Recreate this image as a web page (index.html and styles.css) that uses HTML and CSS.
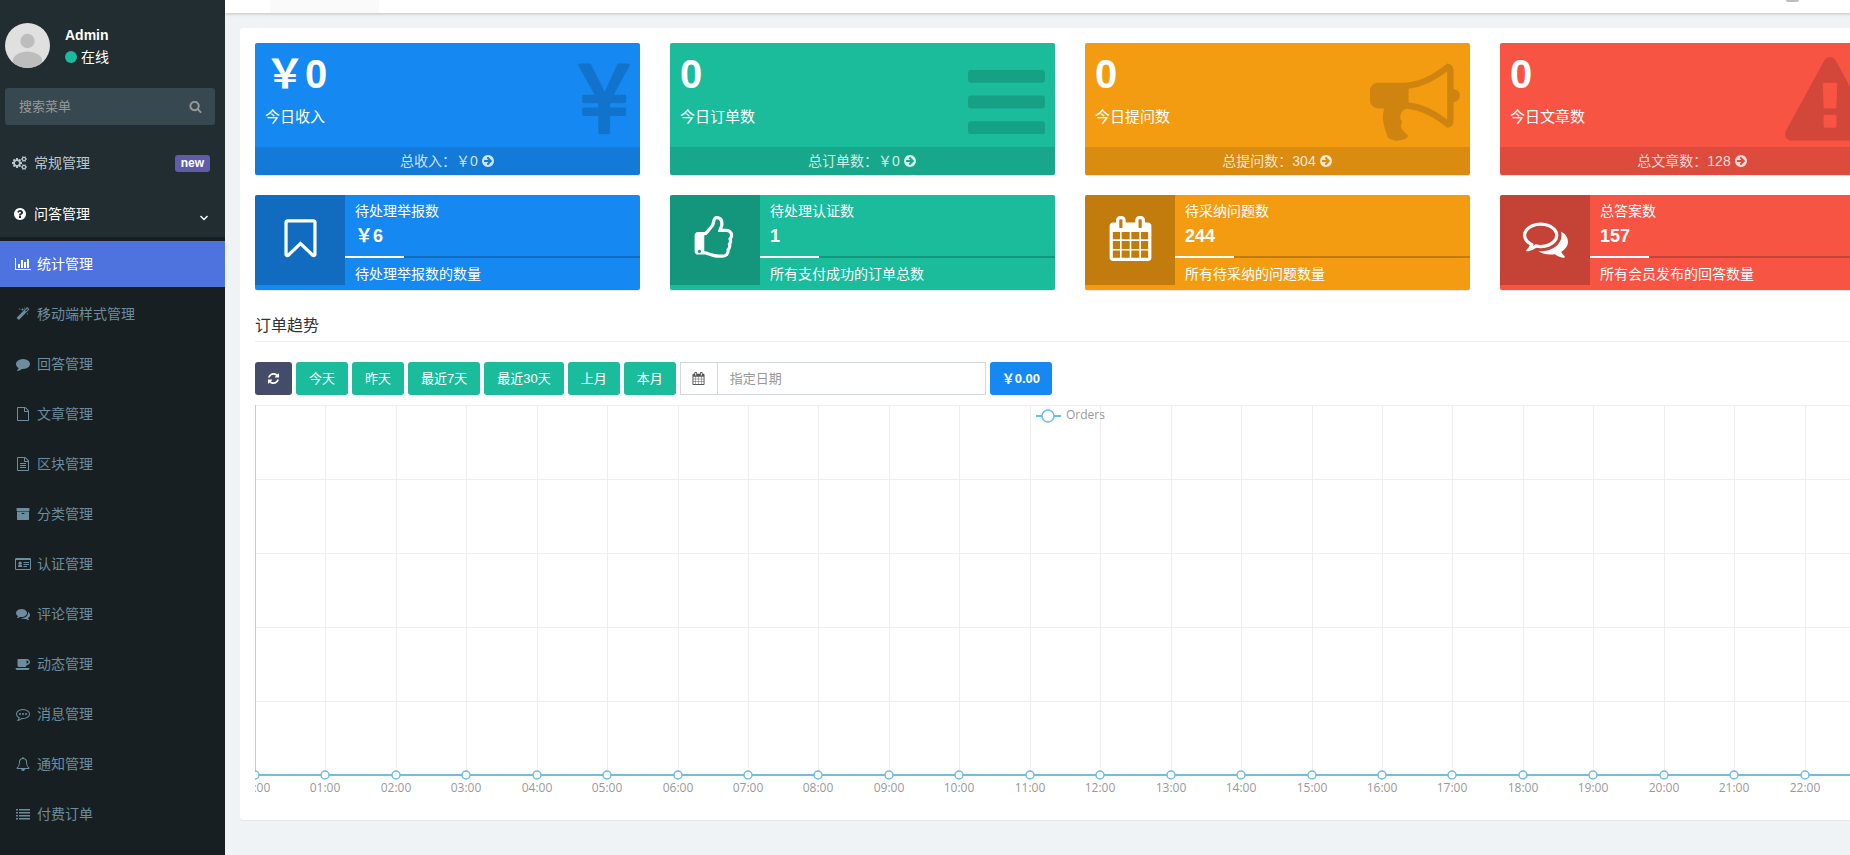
FILE: index.html
```html
<!DOCTYPE html>
<html lang="zh-CN">
<head>
<meta charset="utf-8">
<title>统计管理</title>
<link rel="stylesheet" href="styles.css">
</head>
<body>
<svg class="sprite" aria-hidden="true">
  <symbol id="i-search" viewBox="0 0 1792 1792"><path d="M1216 832q0-185-131.500-316.500t-316.500-131.500-316.500 131.500-131.500 316.500 131.500 316.500 316.500 131.500 316.500-131.500 131.500-316.500zm512 832q0 52-38 90t-90 38q-54 0-90-38l-343-342q-179 124-399 124-143 0-273.500-55.500t-225-150-150-225-55.500-273.500 55.500-273.500 150-225 225-150 273.500-55.500 273.500 55.500 225 150 150 225 55.500 273.500q0 220-124 399l343 343q37 37 37 90z"/></symbol>
  <symbol id="i-cogs" viewBox="0 0 1920 1792"><path d="M832 896q0-106-75-181t-181-75-181 75-75 181 75 181 181 75 181-75 75-181zm768 512q0-52-38-90t-90-38-90 38-38 90q0 53 37.500 90.500t90.500 37.500 90.500-37.500 37.500-90.500zm0-1024q0-52-38-90t-90-38-90 38-38 90q0 53 37.500 90.500t90.500 37.500 90.500-37.500 37.500-90.500zm-384 421v185q0 10-7 19.500t-16 10.500l-155 24q-11 35-32 76 34 48 90 115 7 11 7 20 0 12-7 19-23 30-82.500 89.500t-78.500 59.500q-11 0-21-7l-115-90q-37 19-77 31-11 108-23 155-7 24-30 24h-186q-11 0-20-7.500t-10-17.500l-23-153q-34-10-75-31l-118 89q-7 7-20 7-11 0-21-8-144-133-144-160 0-9 7-19 10-14 41-53t47-61q-23-44-35-82l-152-24q-10-1-17-9.500t-7-19.500v-185q0-10 7-19.500t16-10.500l155-24q11-35 32-76-34-48-90-115-7-11-7-20 0-12 7-20 22-30 82-89t79-59q11 0 21 7l115 90q34-18 77-32 11-108 23-154 7-24 30-24h186q11 0 20 7.500t10 17.500l23 153q34 10 75 31l118-89q8-7 20-7 11 0 21 8 144 133 144 160 0 8-7 19-12 16-42 54t-45 60q23 48 34 82l152 23q10 2 17 10.500t7 19.500zm640 533v140q0 16-149 31-12 27-30 52 51 113 51 138 0 4-4 7-122 71-124 71-8 0-46-47t-52-68q-20 2-30 2t-30-2q-14 21-52 68t-46 47q-2 0-124-71-4-3-4-7 0-25 51-138-18-25-30-52-149-15-149-31v-140q0-16 149-31 13-29 30-52-51-113-51-138 0-4 4-7 4-2 35-20t59-34 30-16q8 0 46 46.500t52 67.500q20-2 30-2t30 2q51-71 92-112l6-2q4 0 124 70 4 3 4 7 0 25-51 138 17 23 30 52 149 15 149 31zm0-1024v140q0 16-149 31-12 27-30 52 51 113 51 138 0 4-4 7-122 71-124 71-8 0-46-47t-52-68q-20 2-30 2t-30-2q-14 21-52 68t-46 47q-2 0-124-71-4-3-4-7 0-25 51-138-18-25-30-52-149-15-149-31v-140q0-16 149-31 13-29 30-52-51-113-51-138 0-4 4-7 4-2 35-20t59-34 30-16q8 0 46 46.500t52 67.500q20-2 30-2t30 2q51-71 92-112l6-2q4 0 124 70 4 3 4 7 0 25-51 138 17 23 30 52 149 15 149 31z"/></symbol>
  <symbol id="i-question" viewBox="0 0 1792 1792"><path d="M1024 1376v-192q0-14-9-23t-23-9h-192q-14 0-23 9t-9 23v192q0 14 9 23t23 9h192q14 0 23-9t9-23zm256-672q0-88-55.500-163t-138.500-116-170-41q-243 0-371 213-15 24 8 42l132 100q7 6 19 6 16 0 25-12 53-68 86-92 34-24 86-24 48 0 85.500 26t37.500 59q0 38-20 61t-68 45q-63 28-115.500 86.500t-52.500 125.500v36q0 14 9 23t23 9h192q14 0 23-9t9-23q0-19 21.500-49.500t54.500-49.500q32-18 49-28.500t46-35 44.500-48 28-60.500 12.500-81zm384 192q0 209-103 385.500t-279.500 279.500-385.500 103-385.500-103-279.500-279.500-103-385.500 103-385.500 279.500-279.500 385.500-103 385.500 103 279.500 279.500 103 385.500z"/></symbol>
  <symbol id="i-chart" viewBox="0 0 2048 1792"><path d="M640 896v512h-256v-512h256zm384-512v1024h-256v-1024h256zm1024 1152v128h-2048v-1536h128v1408h1920zm-640-896v768h-256v-768h256zm384-384v1152h-256v-1152h256z"/></symbol>
  <symbol id="i-magic" viewBox="0 0 1792 1792"><path fill-rule="evenodd" d="M1254 581l293-293-107-107-293 293zm447-293q0 27-18 45l-1286 1286q-18 18-45 18t-45-18l-198-198q-18-18-18-45t18-45l1286-1286q18-18 45-18t45 18l198 198q18 18 18 45z"/><path d="M448 128l40 88 88 40-88 40-40 88-40-88-88-40 88-40zM832 128l64 132 132 60-132 60-64 132-64-132-132-60 132-60zM1472 768l40 88 88 40-88 40-40 88-40-88-88-40 88-40zM1088 20l30 78 78 30-78 30-30 78-30-78-78-30 78-30z"/></symbol>
  <symbol id="i-comment" viewBox="0 0 1792 1792"><path d="M1792 896q0 174-120 321.500t-326 233-450 85.500q-70 0-145-8-198 175-460 242-49 14-114 22-17 2-30.500-9t-17.500-29v-1q-3-4-.5-12t2-10 4.500-9.500l6-9 7-8.500 8-9q7-8 31-34.500t34.500-38 31-39.500 32.500-51 27-59 26-76q-157-89-247.500-220t-90.500-281q0-130 71-248.500t191-204.500 286-136.500 348-50.500q244 0 450 85.500t326 233 120 321.500z"/></symbol>
  <symbol id="i-file" viewBox="0 0 1792 1792"><path d="M1596 380q28 28 48 76t20 88v1152q0 40-28 68t-68 28h-1344q-40 0-68-28t-28-68v-1600q0-40 28-68t68-28h896q40 0 88 20t76 48zm-444-244v376h376q-10-29-22-41l-313-313q-12-12-41-22zm384 1528v-1024h-416q-40 0-68-28t-28-68v-416h-768v1536h1280z"/></symbol>
  <symbol id="i-file-text" viewBox="0 0 1792 1792"><path d="M1596 380q28 28 48 76t20 88v1152q0 40-28 68t-68 28h-1344q-40 0-68-28t-28-68v-1600q0-40 28-68t68-28h896q40 0 88 20t76 48zm-444-244v376h376q-10-29-22-41l-313-313q-12-12-41-22zm384 1528v-1024h-416q-40 0-68-28t-28-68v-416h-768v1536h1280zM512 768h768v128h-768zM512 1024h768v128h-768zM512 1280h768v128h-768z"/></symbol>
  <symbol id="i-archive" viewBox="0 0 1792 1792"><path d="M1088 832q0-26-19-45t-45-19h-256q-26 0-45 19t-19 45 19 45 45 19h256q26 0 45-19t19-45zm576-192v960q0 26-19 45t-45 19h-1408q-26 0-45-19t-19-45v-960q0-26 19-45t45-19h1408q26 0 45 19t19 45zm64-448v256q0 26-19 45t-45 19h-1536q-26 0-45-19t-19-45v-256q0-26 19-45t45-19h1536q26 0 45 19t19 45z"/></symbol>
  <symbol id="i-card" viewBox="0 0 2048 1792"><path fill-rule="evenodd" d="M160 128h1728q66 0 113 47t47 113v1216q0 66-47 113t-113 47h-1728q-66 0-113-47t-47-113v-1216q0-66 47-113t113-47zM128 384v1120q0 32 32 32h1728q32 0 32-32v-1120z"/><path d="M384 1280q-10-250 130-300h280q140 50 130 300zM1088 640h704v128h-704zM1088 896h704v128h-704zM1088 1152h448v128h-448z"/><circle cx="654" cy="790" r="210"/></symbol>
  <symbol id="i-comments" viewBox="0 0 1792 1792"><path d="M1408 768q0 139-94 257t-256.500 186.500-353.500 68.500q-86 0-176-16-124 88-278 128-36 9-86 16h-3q-11 0-20.500-8t-11.500-21q-1-3-1-6.500t.5-6.500 2-6l2.500-5 3.500-5.500 4-5 4.500-5 4-4.500q5-6 23-25t26-29.500 22.500-29 25-38.500 20.500-44q-124-72-195-177t-71-224q0-139 94-257t256.500-186.500 353.500-68.500 353.500 68.500 256.500 186.500 94 257zm384 256q0 120-71 224.500t-195 176.500q10 24 20.500 44t25 38.500 22.500 29 26 29.500 23 25q1 1 4 4.500t4.500 5 4 5 3.500 5.500l2.500 5 2 6 .5 6.500-1 6.500q-3 14-13 22t-22 7q-50-7-86-16-154-40-278-128-90 16-176 16-271 0-472-132 58 4 88 4 161 0 309-45t264-129q125-92 192-212t67-254q0-77-23-152 129 71 204 178t75 230z"/></symbol>
  <symbol id="i-comments-o" viewBox="0 0 1792 1792"><path d="M704 384q-153 0-286 52t-211.500 141-78.500 191q0 82 53 158t149 132l97 56-35 84q34-20 62-39l44-31 53 10q78 14 153 14 153 0 286-52t211.500-141 78.500-191-78.500-191-211.500-141-286-52zm0-128q191 0 353.500 68.500t256.500 186.500 94 257-94 257-256.500 186.500-353.500 68.500q-86 0-176-16-124 88-278 128-36 9-86 16h-3q-11 0-20.500-8t-11.500-21q-1-3-1-6.500t.5-6.500 2-6l2.500-5 3.500-5.500 4-5 4.500-5 4-4.500q5-6 23-25t26-29.500 22.500-29 25-38.500 20.500-44q-124-72-195-177t-71-224q0-139 94-257t256.500-186.500 353.500-68.500zm822 1169q10 24 20.500 44t25 38.500 22.500 29 26 29.500 23 25q1 1 4 4.500t4.500 5 4 5 3.500 5.500l2.500 5 2 6 .5 6.500-1 6.500q-3 14-13 22t-22 7q-50-7-86-16-154-40-278-128-90 16-176 16-271 0-472-132 58 4 88 4 161 0 309-45t264-129q125-92 192-212t67-254q0-77-23-152 129 71 204 178t75 230q0 120-71 224.500t-195 176.500z"/></symbol>
  <symbol id="i-coffee" viewBox="0 0 1920 1792"><path d="M1664 640q0-80-56-136t-136-56h-64v384h64q80 0 136-56t56-136zm-1664 768h1792q0 106-75 181t-181 75h-1280q-106 0-181-75t-75-181zm1856-768q0 159-112.500 271.500t-271.500 112.500h-64v32q0 92-66 158t-158 66h-704q-92 0-158-66t-66-158v-736q0-26 19-45t45-19h1152q159 0 271.500 112.500t112.500 271.500z"/></symbol>
  <symbol id="i-commenting" viewBox="0 0 1792 1792"><path d="M896 384q-204 0-381.500 69.500t-282 187.500-104.500 255q0 112 71.500 213.500t201.500 175.500l87 50-27 96q-24 91-70 172 152-63 275-171l43-38 57 6q69 8 130 8 204 0 381.500-69.500t282-187.500 104.500-255-104.500-255-282-187.500-381.500-69.500zm896 512q0 174-120 321.500t-326 233-450 85.500q-70 0-145-8-198 175-460 242-49 14-114 22h-5q-15 0-27-10.500t-16-27.500v-1q-3-4-.5-12t2-10 4.500-9.500l6-9 7-8.500 8-9q7-8 31-34.500t34.500-38 31-39.500 32.500-51 27-59 26-76q-157-89-247.500-220t-90.500-281q0-174 120-321.500t326-233 450-85.500 450 85.500 326 233 120 321.500z"/><circle cx="512" cy="896" r="128"/><circle cx="896" cy="896" r="128"/><circle cx="1280" cy="896" r="128"/></symbol>
  <symbol id="i-bell" viewBox="0 0 1792 1792"><path d="M912 1696q0-16-16-16-59 0-101.500-42.500t-42.500-101.500q0-16-16-16t-16 16q0 73 51.500 124.500t124.500 51.500q16 0 16-16zm-666-288h1300q-266-300-266-832 0-51-24-105t-69-103-121.500-80.500-169.500-31.500-169.500 31.500-121.500 80.500-69 103-24 105q0 532-266 832zm1482 0q0 52-38 90t-90 38h-448q0 106-75 181t-181 75-181-75-75-181h-448q-52 0-90-38t-38-90q50-42 91-88t85-119.500 74.500-158.500 50-206 19.500-260q0-152 117-282.500t307-158.500q-8-19-8-39 0-40 28-68t68-28 68 28 28 68q0 20-8 39 190 28 307 158.500t117 282.500q0 139 19.500 260t50 206 74.500 158.500 85 119.500 91 88z"/></symbol>
  <symbol id="i-list" viewBox="0 0 1792 1792"><path d="M0 256h256v192H0zM0 640h256v192H0zM0 1024h256v192H0zM0 1408h256v192H0zM384 256h1408v192H384zM384 640h1408v192H384zM384 1024h1408v192H384zM384 1408h1408v192H384z"/></symbol>
  <symbol id="i-yen" viewBox="382 0 1029 1792"><path d="M985.500 1536h-172q-13 0-22.500-9t-9.500-23v-330h-288q-13 0-22.500-9t-9.500-23v-103q0-13 9.500-22.500t22.500-9.500h288v-85h-288q-13 0-22.500-9t-9.500-23v-104q0-13 9.500-22.500t22.500-9.500h214l-321-578q-8-16 0-32 10-16 28-16h194q19 0 29 18l215 425q19 38 56 125 10-24 30.500-68t27.500-61l191-420q8-19 29-19h191q17 0 27 16 9 14 1 31l-313 579h215q13 0 22.500 9.500t9.500 22.500v104q0 14-9.500 23t-22.500 9h-290v85h290q13 0 22.500 9.500t9.500 22.500v103q0 14-9.500 23t-22.500 9h-290v330q0 13-9.500 22.500t-22.500 9.500z"/></symbol>
  <symbol id="i-bars" viewBox="128 0 1536 1792"><rect x="128" y="256" width="1536" height="256" rx="64"/><rect x="128" y="768" width="1536" height="256" rx="64"/><rect x="128" y="1280" width="1536" height="256" rx="64"/></symbol>
  <symbol id="i-bullhorn" viewBox="0 0 1792 1792"><path d="M1664 640q53 0 90.500 37.500t37.500 90.500-37.500 90.500-90.500 37.500v384q0 52-38 90t-90 38q-417-347-812-380-58 19-91 66t-31 100.500 40 92.500q-20 33-23 65.500t6 58 33.500 55 48 50 61.500 50.500q-29 58-111.500 83t-168.500 11.500-132-55.500q-7-23-29.500-87.500t-32-94.500-23-89-15-101 3.500-98.500 22-110.500h-122q-66 0-113-47t-47-113v-192q0-66 47-113t113-47h480q435 0 896-384 52 0 90 38t38 90v384zm-128 604v-954q-394 302-768 343v270q377 42 768 341z"/></symbol>
  <symbol id="i-warning" viewBox="0 0 1792 1792"><path d="M1024 1375v-190q0-14-9.500-23.500t-22.500-9.500h-192q-13 0-22.500 9.500t-9.500 23.500v190q0 14 9.500 23.500t22.500 9.500h192q13 0 22.500-9.500t9.500-23.500zm-2-374l18-459q0-12-10-19-13-11-24-11h-220q-11 0-24 11-10 7-10 21l17 457q0 10 10 16.500t24 6.500h185q14 0 23.500-6.500t10.500-16.500zm-14-934l768 1408q35 63-2 126-17 29-46.500 46t-63.500 17h-1536q-34 0-63.500-17t-46.500-46q-37-63-2-126l768-1408q17-31 47-49t65-18 65 18 47 49z"/></symbol>
  <symbol id="i-arrow" viewBox="0 0 1792 1792"><path d="M1413 896q0-27-18-45l-91-91-362-362q-18-18-45-18t-45 18l-91 91q-18 18-18 45t18 45l189 189h-502q-26 0-45 19t-19 45v128q0 26 19 45t45 19h502l-189 189q-18 18-18 45t18 45l91 91q18 18 45 18t45-18l362-362 91-91q18-18 18-45zm251 0q0 209-103 385.500t-279.500 279.500-385.500 103-385.500-103-279.500-279.500-103-385.500 103-385.500 279.500-279.500 385.500-103 385.500 103 279.500 279.500 103 385.500z"/></symbol>
  <symbol id="i-bookmark" viewBox="0 0 1792 1792"><path d="M1408 256h-1024v1242l423-406 89-85 89 85 423 406v-1242zm12-128q23 0 44 9 33 13 52.500 41t19.500 62v1289q0 34-19.500 62t-52.500 41q-19 8-44 8-48 0-83-32l-441-424-441 424q-36 33-83 33-23 0-44-9-33-13-52.500-41t-19.500-62v-1289q0-34 19.500-62t52.500-41q21-9 44-9h1048z"/></symbol>
  <symbol id="i-thumb" viewBox="-64 0 1792 1792"><path d="M256 1408q0-26-19-45t-45-19q-27 0-45.500 19t-18.500 45q0 27 18.500 45.500t45.500 18.500q26 0 45-18.500t19-45.500zm1152-640q0-51-39-89.500t-89-38.500h-352q0-58 48-159.500t48-160.500q0-98-32-145t-128-47q-26 26-38 85t-30.500 125.500-59.500 109.500q-22 23-77 91-4 5-23 30t-31.500 41-34.500 42.500-40 44-38.500 35.500-40 27-35.500 9h-32v640h32q13 0 31.500 3t33 6.500 38 11 35 11.500 35.500 12.500 29 10.500q211 73 342 73h121q192 0 192-167 0-26-5-56 30-16 47.500-52.500t17.500-73.500-18-69q53-50 53-119 0-25-10-55.500t-25-47.500q32-1 53.500-47t21.500-81zm128-1q0 89-49 163 9 33 9 69 0 77-38 144 3 21 3 43 0 101-60 178 1 139-85 219.500t-227 80.500h-129q-96 0-189.500-22.500t-216.500-65.500q-116-40-138-40h-288q-53 0-90.500-37.500t-37.500-90.500v-640q0-53 37.500-90.500t90.500-37.500h274q36-24 137-155 58-75 107-128 24-25 35.500-85.500t30.500-126.500 62-108q39-37 90-37 84 0 151 32.500t102 101.500 35 186q0 93-48 192h176q104 0 180 76t76 179z"/></symbol>
  <symbol id="i-calendar" viewBox="0 0 1792 1792"><path d="M192 1664h288v-288h-288v288zm352 0h320v-288h-320v288zm-352-352h288v-320h-288v320zm352 0h320v-320h-320v320zm-352-384h288v-288h-288v288zm736 736h320v-288h-320v288zm-384-736h320v-288h-320v288zm768 736h288v-288h-288v288zm-384-352h320v-320h-320v320zm-352-864v-288q0-13-9.500-22.500t-22.500-9.500h-64q-13 0-22.500 9.500t-9.500 22.500v288q0 13 9.500 22.500t22.500 9.500h64q13 0 22.500-9.500t9.500-22.500zm736 864h288v-320h-288v320zm-384-384h320v-288h-320v288zm384 0h288v-288h-288v288zm32-480v-288q0-13-9.500-22.500t-22.500-9.500h-64q-13 0-22.500 9.500t-9.500 22.500v288q0 13 9.500 22.500t22.500 9.500h64q13 0 22.500-9.500t9.500-22.500zm384-64v1280q0 52-38 90t-90 38h-1408q-52 0-90-38t-38-90v-1280q0-52 38-90t90-38h128v-96q0-66 47-113t113-47h64q66 0 113 47t47 113v96h384v-96q0-66 47-113t113-47h64q66 0 113 47t47 113v96h128q52 0 90 38t38 90z"/></symbol>
  <symbol id="i-refresh" viewBox="0 0 1792 1792"><path d="M1639 1056q0 5-1 7-64 268-268 434.500t-478 166.500q-146 0-282.500-55t-243.500-157l-129 129q-19 19-45 19t-45-19-19-45v-448q0-26 19-45t45-19h448q26 0 45 19t19 45-19 45l-137 137q71 66 161 102t187 36q134 0 250-65t186-179q11-17 53-117 8-23 30-23h192q13 0 22.500 9.500t9.500 22.500zm25-800v448q0 26-19 45t-45 19h-448q-26 0-45-19t-19-45 19-45l138-138q-148-137-349-137-134 0-250 65t-186 179q-11 17-53 117-8 23-30 23h-199q-13 0-22.500-9.500t-9.500-22.500v-7q65-268 270-434.500t480-166.500q146 0 284 55.500t245 156.500l130-129q19-19 45-19t45 19 19 45z"/></symbol>
</svg>

<div class="layout">
  <aside class="sidebar">
    <div class="user">
      <svg class="avatar" viewBox="0 0 45 45" aria-hidden="true">
        <clipPath id="avatar-clip"><circle cx="22.500" cy="22.500" r="22.500"/></clipPath>
        <g clip-path="url(#avatar-clip)">
          <rect width="45" height="45" fill="#e0e0e0"/>
          <circle cx="22.500" cy="18" r="7.200" fill="#bdbdbd"/>
          <ellipse cx="22.500" cy="38" rx="14.700" ry="9.500" fill="#bdbdbd"/>
        </g>
      </svg>
      <div class="user-info">
        <strong class="user-name">Admin</strong>
        <span class="user-status"><i class="dot"></i>在线</span>
      </div>
    </div>
    <form class="search">
      <input class="search-input" type="text" placeholder="搜索菜单" aria-label="搜索菜单">
      <button class="search-btn" type="button" aria-label="搜索"><svg class="icon"><use href="#i-search"/></svg></button>
    </form>
    <nav class="menu">
      <a class="menu-item" href="#"><span class="menu-icon"><svg class="icon icon-wide"><use href="#i-cogs"/></svg></span>常规管理<span class="badge">new</span></a>
      <a class="menu-item menu-open" href="#"><span class="menu-icon"><svg class="icon"><use href="#i-question"/></svg></span>问答管理<svg class="chevron" viewBox="0 0 8 6"><path d="M0.500 1l3.500 3.500L7.500 1"/></svg></a>
      <div class="submenu">
        <a class="sub-item active" href="#"><span class="menu-icon"><svg class="icon icon-wide"><use href="#i-chart"/></svg></span>统计管理</a>
        <a class="sub-item" href="#"><span class="menu-icon"><svg class="icon"><use href="#i-magic"/></svg></span>移动端样式管理</a>
        <a class="sub-item" href="#"><span class="menu-icon"><svg class="icon"><use href="#i-comment"/></svg></span>回答管理</a>
        <a class="sub-item" href="#"><span class="menu-icon"><svg class="icon"><use href="#i-file"/></svg></span>文章管理</a>
        <a class="sub-item" href="#"><span class="menu-icon"><svg class="icon"><use href="#i-file-text"/></svg></span>区块管理</a>
        <a class="sub-item" href="#"><span class="menu-icon"><svg class="icon"><use href="#i-archive"/></svg></span>分类管理</a>
        <a class="sub-item" href="#"><span class="menu-icon"><svg class="icon icon-wide"><use href="#i-card"/></svg></span>认证管理</a>
        <a class="sub-item" href="#"><span class="menu-icon"><svg class="icon"><use href="#i-comments"/></svg></span>评论管理</a>
        <a class="sub-item" href="#"><span class="menu-icon"><svg class="icon icon-wide"><use href="#i-coffee"/></svg></span>动态管理</a>
        <a class="sub-item" href="#"><span class="menu-icon"><svg class="icon"><use href="#i-commenting"/></svg></span>消息管理</a>
        <a class="sub-item" href="#"><span class="menu-icon"><svg class="icon"><use href="#i-bell"/></svg></span>通知管理</a>
        <a class="sub-item" href="#"><span class="menu-icon"><svg class="icon"><use href="#i-list"/></svg></span>付费订单</a>
      </div>
    </nav>
  </aside>

  <div class="content">
    <header class="topbar"><span class="topbar-tab"></span><span class="topbar-avatar"></span></header>
    <main class="panel">
      <section class="cards">
        <article class="stat blue">
          <div class="stat-body"><div><h3 class="stat-value">￥0</h3><p class="stat-label">今日收入</p></div><svg class="stat-icon yen"><use href="#i-yen"/></svg></div>
          <a class="stat-footer" href="#">总收入：￥0 <svg class="icon"><use href="#i-arrow"/></svg></a>
        </article>
        <article class="stat green">
          <div class="stat-body"><div><h3 class="stat-value">0</h3><p class="stat-label">今日订单数</p></div><svg class="stat-icon bars"><use href="#i-bars"/></svg></div>
          <a class="stat-footer" href="#">总订单数：￥0 <svg class="icon"><use href="#i-arrow"/></svg></a>
        </article>
        <article class="stat orange">
          <div class="stat-body"><div><h3 class="stat-value">0</h3><p class="stat-label">今日提问数</p></div><svg class="stat-icon"><use href="#i-bullhorn"/></svg></div>
          <a class="stat-footer" href="#">总提问数：304 <svg class="icon"><use href="#i-arrow"/></svg></a>
        </article>
        <article class="stat red">
          <div class="stat-body"><div><h3 class="stat-value">0</h3><p class="stat-label">今日文章数</p></div><svg class="stat-icon"><use href="#i-warning"/></svg></div>
          <a class="stat-footer" href="#">总文章数：128 <svg class="icon"><use href="#i-arrow"/></svg></a>
        </article>
        <article class="info blue">
          <span class="info-icon"><svg class="icon"><use href="#i-bookmark"/></svg></span>
          <div class="info-body"><span class="info-text">待处理举报数</span><strong class="info-number">￥6</strong><div class="progress"><div class="progress-bar"></div></div><span class="info-text">待处理举报数的数量</span></div>
        </article>
        <article class="info green">
          <span class="info-icon"><svg class="icon"><use href="#i-thumb"/></svg></span>
          <div class="info-body"><span class="info-text">待处理认证数</span><strong class="info-number">1</strong><div class="progress"><div class="progress-bar"></div></div><span class="info-text">所有支付成功的订单总数</span></div>
        </article>
        <article class="info orange">
          <span class="info-icon"><svg class="icon"><use href="#i-calendar"/></svg></span>
          <div class="info-body"><span class="info-text">待采纳问题数</span><strong class="info-number">244</strong><div class="progress"><div class="progress-bar"></div></div><span class="info-text">所有待采纳的问题数量</span></div>
        </article>
        <article class="info red">
          <span class="info-icon"><svg class="icon"><use href="#i-comments-o"/></svg></span>
          <div class="info-body"><span class="info-text">总答案数</span><strong class="info-number">157</strong><div class="progress"><div class="progress-bar"></div></div><span class="info-text">所有会员发布的回答数量</span></div>
        </article>
      </section>

      <h2 class="section-title">订单趋势</h2>
      <div class="toolbar">
        <button class="btn btn-dark" type="button" aria-label="刷新"><svg class="icon"><use href="#i-refresh"/></svg></button>
        <button class="btn btn-green" type="button">今天</button>
        <button class="btn btn-green" type="button">昨天</button>
        <button class="btn btn-green" type="button">最近7天</button>
        <button class="btn btn-green" type="button">最近30天</button>
        <button class="btn btn-green" type="button">上月</button>
        <button class="btn btn-green" type="button">本月</button>
        <label class="date-group"><span class="date-addon"><svg class="icon"><use href="#i-calendar"/></svg></span><input class="date-input" type="text" placeholder="指定日期" aria-label="指定日期"></label>
        <button class="btn btn-blue" type="button">￥0.00</button>
      </div>
      <svg class="chart" id="chart" role="img" aria-label="Orders"></svg>
    </main>
  </div>
</div>
<script src="app.js"></script>
</body>
</html>
```
FILE: styles.css
```css
* { box-sizing: border-box; }

body {
  margin: 0;
  overflow: hidden;
  background: #eff3f6;
  color: #333;
  font: 14px/20px "Liberation Sans", "Noto Sans CJK SC", sans-serif;
}

a { color: inherit; text-decoration: none; }
h2, h3, p { margin: 0; }
input, button { font-family: inherit; border: 0; padding: 0; }
.sprite { display: none; }
.icon { width: 14px; height: 14px; fill: currentColor; flex: none; }
.icon-wide { width: 16px; }

.layout {
  display: flex;
  width: calc(100% + 65px);
  height: 100vh;
}

/* Sidebar */
.sidebar {
  flex: none;
  width: 225px;
  overflow: hidden;
  background: #222d32;
  color: #b8c7ce;
}
.user { display: flex; gap: 15px; padding: 23px 5px 20px; }
.avatar { width: 45px; height: 45px; }
.user-info { display: flex; flex-direction: column; color: #fff; }
.user-name { line-height: 24px; }
.user-status { display: flex; align-items: center; gap: 4px; }
.dot { width: 12px; height: 12px; border-radius: 50%; background: #1abc9c; }

.search {
  display: flex;
  align-items: center;
  margin: 0 10px 15px 5px;
  height: 37px;
  border-radius: 3px;
  background: #374850;
}
.search-input {
  flex: 1;
  min-width: 0;
  height: 100%;
  padding-left: 14px;
  background: none;
  color: #fff;
  font-size: 13px;
}
.search-input::placeholder { color: #999; opacity: 1; }
.search-btn { display: flex; padding: 0 13px; background: none; color: #999; }
.search-btn .icon { width: 13px; height: 13px; }

.menu { display: flex; flex-direction: column; gap: 5px; }
.menu-item, .sub-item { display: flex; align-items: center; height: 46px; }
.menu-item { padding: 0 15px 0 11px; }
.menu-open { color: #fff; margin-bottom: -5px; }
.menu-icon { display: flex; justify-content: center; width: 18px; margin-right: 5px; }
.badge {
  margin-left: auto;
  padding: 0 6px;
  border-radius: 3px;
  background: #605ca8;
  color: #fff;
  font-size: 12px;
  font-weight: bold;
  line-height: 17px;
}
.chevron {
  width: 8px;
  height: 6px;
  margin: 7px 2px 0 auto;
  fill: none;
  stroke: #fff;
  stroke-width: 1.500;
}
.submenu {
  display: flex;
  flex-direction: column;
  gap: 4px;
  padding: 4px 0;
  min-height: 640px;
  background: #181f23;
  color: #6c8d9c;
}
.sub-item { padding-left: 14px; }
.active { background: #4e73df; color: #fff; }

/* Header and panel */
.content { flex: 1; min-width: 0; }
.topbar {
  display: flex;
  justify-content: space-between;
  height: 13px;
  padding: 0 116px 0 45px;
  overflow: hidden;
  background: #fff;
  box-shadow: 0 1px 3px rgba(0, 0, 0, .2);
}
.topbar-tab { width: 109px; background: #fafafa; }
.topbar-avatar {
  align-self: flex-end;
  width: 13px;
  height: 2px;
  margin-bottom: 11px;
  border-radius: 0 0 6px 6px;
  background: #bdbdbd;
}
.panel {
  margin: 15px;
  padding: 15px;
  border-radius: 3px;
  background: #fff;
  box-shadow: 0 1px 1px rgba(0, 0, 0, .05);
}

.cards { display: grid; grid-template-columns: repeat(4, 1fr); gap: 20px 30px; }
.blue { background: #1688f1; }
.green { background: #1abc9c; }
.orange { background: #f39c12; }
.red { background: #f75444; }

.stat, .info {
  overflow: hidden;
  border-radius: 2px;
  color: #fff;
  box-shadow: 0 1px 1px rgba(0, 0, 0, .1);
}
.stat-body {
  display: flex;
  justify-content: space-between;
  align-items: flex-end;
  height: 104px;
  padding: 0 10px;
}
.stat-value { font-size: 40px; line-height: 42px; }
.stat-label { padding: 11px 0 19px; font-size: 15px; line-height: 22px; }
.stat-icon { width: 90px; height: 90px; fill: rgba(0, 0, 0, .15); }
.stat-icon.yen { width: 52px; }
.stat-icon.bars { width: 77px; }
.stat-footer {
  display: flex;
  justify-content: center;
  align-items: center;
  gap: 3px;
  height: 28px;
  background: rgba(0, 0, 0, .1);
  color: rgba(255, 255, 255, .8);
}

.info { display: flex; align-items: flex-start; height: 95px; }
.info-icon {
  display: flex;
  justify-content: center;
  align-items: center;
  width: 90px;
  height: 90px;
  padding-bottom: 3px;
  background: rgba(0, 0, 0, .2);
}
.info-icon .icon { width: 45px; height: 45px; }
.info-body { flex: 1; padding: 5px 10px; }
.info-text { display: block; line-height: 22px; }
.info-number { display: block; font-size: 18px; line-height: 29px; }
.progress { height: 2px; margin: 5px -10px 5px; background: rgba(0, 0, 0, .2); }
.progress-bar { width: 20%; height: 2px; background: #fff; }

/* Chart section */
.section-title {
  margin: 20px 0;
  padding: 5px 0 4px;
  border-bottom: 1px solid #eee;
  font-size: 16px;
  font-weight: normal;
  line-height: 22px;
}
.toolbar { display: flex; gap: 4px; height: 33px; margin-bottom: 10px; }
.btn {
  display: flex;
  align-items: center;
  padding: 0 13px 3px;
  border-radius: 3px;
  color: #fff;
  font-size: 13px;
}
.btn-dark { padding: 0 12px; background: #444c69; }
.btn-green { background: #1abc9c; }
.btn-blue { padding: 0 12px 3px; background: #1688f1; font-weight: bold; }
.btn .icon { width: 13px; height: 13px; }
.date-group { display: flex; width: 306px; border: 1px solid #d2d6de; }
.date-addon {
  display: flex;
  justify-content: center;
  align-items: center;
  width: 37px;
  border-right: 1px solid #d2d6de;
  color: #555;
}
.date-addon .icon { width: 13px; height: 13px; }
.date-input { flex: 1; min-width: 0; padding: 0 12px; font-size: 13px; }
.date-input::placeholder { color: #999; opacity: 1; }

.chart { display: block; width: 100%; height: 400px; overflow: hidden; }
.chart text { fill: #999; font: 12px "Open Sans", sans-serif; }
.grid-line { stroke: #eee; }
.axis-line { stroke: #ccc; }
.series-line { stroke: #6bbfe3; stroke-width: 2; }
.point { fill: #fff; stroke: #6bbfe3; stroke-width: 1.500; }
```
FILE: app.js
```js
const chart = document.getElementById('chart');
const NS = 'http://www.w3.org/2000/svg';

function add(name, attrs, text) {
  const el = document.createElementNS(NS, name);
  for (const key in attrs) el.setAttribute(key, attrs[key]);
  if (text) el.textContent = text;
  chart.appendChild(el);
}

function draw() {
  chart.replaceChildren();
  const width = chart.clientWidth;
  const plot = width - 10;
  const bottom = 370;
  const xs = Array.from({ length: 24 }, (_, i) => Math.round(i * plot / 23));

  for (let y = 0; y < bottom; y += 74) {
    add('line', { class: 'grid-line', x1: 0, x2: plot, y1: y + 0.5, y2: y + 0.5 });
  }
  xs.forEach((x, i) => {
    add('line', { class: i ? 'grid-line' : 'axis-line', x1: x + 0.5, x2: x + 0.5, y1: 0, y2: bottom });
  });
  add('line', { class: 'series-line', x1: 0, x2: plot, y1: bottom, y2: bottom });
  xs.forEach((x, i) => {
    add('circle', { class: 'point', cx: x, cy: bottom, r: 4 });
    add('text', { x: x, y: 387, 'text-anchor': 'middle' }, String(i).padStart(2, '0') + ':00');
  });

  const mid = Math.round(width / 2);
  add('line', { class: 'series-line', x1: mid - 34, x2: mid - 9, y1: 11, y2: 11 });
  add('circle', { class: 'point', cx: mid - 22, cy: 11, r: 6 });
  add('text', { x: mid - 4, y: 14 }, 'Orders');
}

draw();
window.addEventListener('resize', draw);
```
